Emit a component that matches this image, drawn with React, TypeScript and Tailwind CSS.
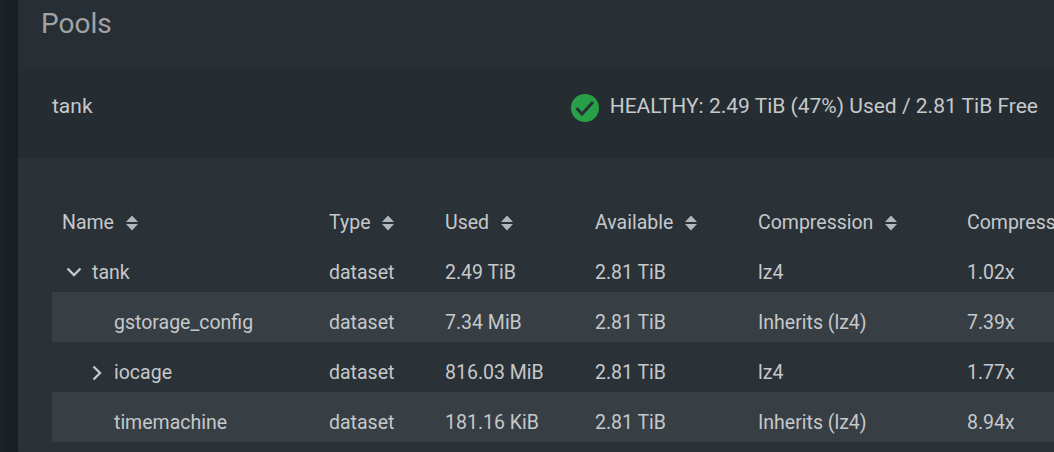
import React from 'react';

const columns = ['Name', 'Type', 'Used', 'Available', 'Compression', 'Compression Ratio'];

const rows = [
  { name: 'tank', used: '2.49 TiB', compression: 'lz4', ratio: '1.02x', arrow: 'down' },
  { name: 'gstorage_config', used: '7.34 MiB', compression: 'Inherits (lz4)', ratio: '7.39x' },
  { name: 'iocage', used: '816.03 MiB', compression: 'lz4', ratio: '1.77x', arrow: 'right' },
  { name: 'timemachine', used: '181.16 KiB', compression: 'Inherits (lz4)', ratio: '8.94x' },
];

const gridCols = 'grid grid-cols-[267px_116px_150px_163px_209px_240px]';

const SortIcon = () => (
  <svg width="12" height="16" viewBox="0 0 12 16" className="ml-[12px] mt-[-1px] shrink-0" fill="#b4b6b8">
    <path d="M6 0.5 L11.6 6.5 Q11.8 7 11.2 7 L0.8 7 Q0.2 7 0.4 6.5 Z" />
    <path d="M6 15.5 L11.6 9.5 Q11.8 9 11.2 9 L0.8 9 Q0.2 9 0.4 9.5 Z" />
  </svg>
);

const Chevron = ({ dir }: { dir: string }) => (
  <svg
    width="16"
    height="16"
    viewBox="0 0 16 16"
    fill="none"
    stroke="#c4c6c8"
    strokeWidth="2.4"
    className="shrink-0"
  >
    {dir === 'down' ? <path d="M1.5 3.5 L8 10 L14.5 3.5" /> : <path d="M4.5 1.5 L11 8 L4.5 14.5" />}
  </svg>
);

const App = () => {
  return (
    <div className="flex h-[452px] w-[1054px] overflow-hidden bg-[#272f35] font-['Roboto',sans-serif] text-[19.5px] text-[#c6c8ca]">
      {/* Sidebar */}
      <div className="w-[18px] shrink-0 bg-gradient-to-r from-[#1b2228] to-[#181e23]" />

      <div className="min-w-0 flex-1">
        <h1 className="h-[68px] pl-[23px] pt-[8px] text-[28px] leading-[32px] text-[#a1a3a5]">Pools</h1>

        <div className="bg-[#252d33]">
          {/* Pool header */}
          <div className="flex h-[90px] items-center justify-between pb-[12px] pl-[34px] pr-[16px] text-[21px]">
            <span>tank</span>
            <div className="flex items-center gap-[11px]">
              <svg width="28" height="28" viewBox="0 0 28 28" className="mt-[2px] shrink-0">
                <circle cx="14" cy="14" r="14" fill="#28a048" />
                <path d="M5.5 14 L11 20 L22 8" fill="none" stroke="#2a3038" strokeWidth="3" />
              </svg>
              <span>HEALTHY: 2.49 TiB (47%) Used / 2.81 TiB Free</span>
            </div>
          </div>

          {/* Datasets table */}
          <div className="h-[294px] bg-[#2a3238] pl-[34px] pt-[39px]">
            <div className={`${gridCols} h-[45px] items-start pt-[14px]`}>
              {columns.map((col, i) => (
                <div key={col} className="flex items-center whitespace-nowrap pl-[10px] leading-[24px]">
                  {col}
                  {i < 5 && <SortIcon />}
                </div>
              ))}
            </div>
            {rows.map((row, i) => (
              <div
                key={row.name}
                className={`${gridCols} h-[50px] items-center pt-[12px] ${i % 2 === 1 ? 'bg-[#373f45]' : ''}`}
              >
                <div className="flex items-center">
                  {row.arrow === 'down' && (
                    <div className="ml-[14px] mr-[10px]">
                      <Chevron dir="down" />
                    </div>
                  )}
                  {row.arrow === 'right' && (
                    <div className="ml-[37px] mr-[9px]">
                      <Chevron dir="right" />
                    </div>
                  )}
                  {!row.arrow && <div className="w-[62px]" />}
                  <span>{row.name}</span>
                </div>
                <div className="pl-[10px]">dataset</div>
                <div className="pl-[10px]">{row.used}</div>
                <div className="pl-[10px]">2.81 TiB</div>
                <div className="pl-[10px]">{row.compression}</div>
                <div className="pl-[10px]">{row.ratio}</div>
              </div>
            ))}
          </div>
        </div>
      </div>
    </div>
  );
};

export default App;
